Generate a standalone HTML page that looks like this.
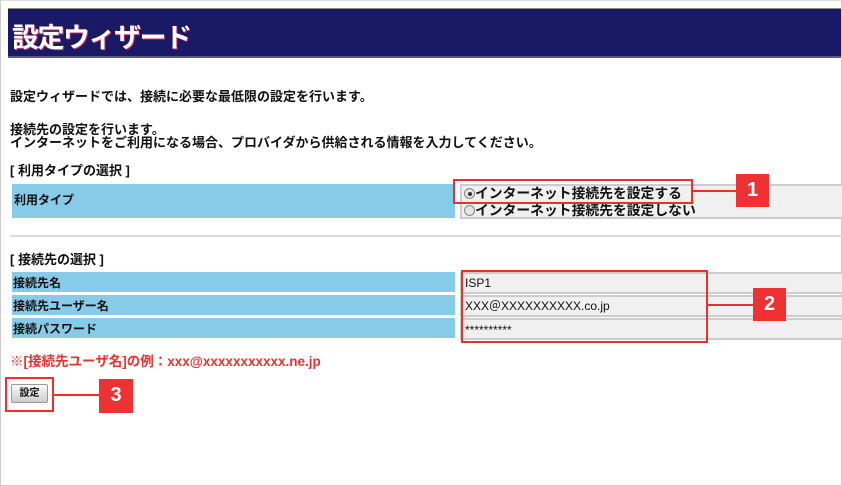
<!DOCTYPE html>
<html><head><meta charset="utf-8"><style>
*{margin:0;padding:0;box-sizing:border-box}
body{width:842px;height:486px;background:#fff;position:relative;overflow:hidden;font-family:"Liberation Sans","Noto Sans CJK JP",sans-serif;font-weight:bold;color:#111}
.a{position:absolute}
.frame{left:0;top:0;width:842px;height:486px;border:1px solid #ccc;border-top:1px solid #ddd}
.hdr{left:8px;top:8px;width:833px;height:50px;background:#191966;border-top:1px solid #888;border-bottom:2px solid #5a5a88}
.hdr span{position:absolute;left:4px;top:7px;color:#fff;font-size:27px;letter-spacing:-1.5px;text-shadow:1px 1px 0 #c0306a}
.t{font-size:12px;white-space:nowrap;line-height:14px}
.m{font-size:13px;line-height:13px}
.blue{background:#87cbe8;left:12px;width:443px}
.cell{background:#f0f0f0;left:460px;width:382px;border-top:2px solid #ccc;border-bottom:2px solid #ccc;border-left:2px solid #ccc}
.rb{border:2px solid #e8302f}
.badge{background:#ee3234;color:#fff;font-size:20px;text-align:center;width:33px;height:33px;line-height:33px}
.ln{height:2px;background:#e8302f}
.rad{display:inline-block;width:11px;height:11px;border-radius:50%;border:1px solid #888;background:#e4e4e4;vertical-align:-1px;position:relative}
.in{font-weight:normal;font-size:12px}
</style></head><body>
<div class="a frame"></div>
<div class="a hdr"><span>設定ウィザード</span></div>
<div class="a t m" style="left:10px;top:90px">設定ウィザードでは、接続に必要な最低限の設定を行います。</div>
<div class="a t m" style="left:10px;top:123px">接続先の設定を行います。</div>
<div class="a t m" style="left:10px;top:136px">インターネットをご利用になる場合、プロバイダから供給される情報を入力してください。</div>
<div class="a t m" style="left:10px;top:164px">[ 利用タイプの選択 ]</div>
<div class="a blue" style="top:184px;height:34px"></div>
<div class="a t" style="left:14px;top:193px">利用タイプ</div>
<div class="a cell" style="top:184px;height:35px"></div>
<div class="a t" style="left:464px;top:185px;font-size:13.8px;line-height:17px"><span class="rad"><span style="position:absolute;left:3px;top:3px;width:4px;height:4px;border-radius:50%;background:#333"></span></span>インターネット接続先を設定する<br><span class="rad"></span>インターネット接続先を設定しない</div>
<div class="a rb" style="left:453px;top:179px;width:240px;height:25px"></div>
<div class="a ln" style="left:692px;top:190px;width:45px"></div>
<div class="a badge" style="left:736px;top:174px">1</div>
<div class="a" style="left:10px;top:235px;width:832px;height:2px;background:#ddd"></div>
<div class="a t m" style="left:10px;top:253px">[ 接続先の選択 ]</div>
<div class="a blue" style="top:272px;height:20px"></div>
<div class="a blue" style="top:295px;height:20px"></div>
<div class="a blue" style="top:318px;height:20px"></div>
<div class="a t" style="left:13px;top:276px">接続先名</div>
<div class="a t" style="left:13px;top:299px">接続先ユーザー名</div>
<div class="a t" style="left:13px;top:322px">接続パスワード</div>
<div class="a cell" style="top:272px;height:22px"></div>
<div class="a cell" style="top:295px;height:22px"></div>
<div class="a cell" style="top:318px;height:22px"></div>
<div class="a t in" style="left:465px;top:276px">ISP1</div>
<div class="a t in" style="left:465px;top:299px">XXX＠XXXXXXXXXX.co.jp</div>
<div class="a t in" style="left:465px;top:323px">**********</div>
<div class="a rb" style="left:461px;top:270px;width:247px;height:73px"></div>
<div class="a ln" style="left:707px;top:304px;width:46px"></div>
<div class="a badge" style="left:753px;top:288px">2</div>
<div class="a t" style="left:10px;top:355px;color:#e8332f;font-size:13.5px">※[接続先ユーザ名]の例：xxx@xxxxxxxxxxx.ne.jp</div>
<div class="a" style="left:11px;top:384px;width:37px;height:19px;border:1px solid #999;border-radius:2px;background:linear-gradient(#fafafa,#ccc);font-size:10px;text-align:center;line-height:17px">設定</div>
<div class="a rb" style="left:5px;top:377px;width:49px;height:35px"></div>
<div class="a ln" style="left:53px;top:394px;width:46px"></div>
<div class="a badge" style="left:99px;top:379px;height:34px;width:34px">3</div>
</body></html>
